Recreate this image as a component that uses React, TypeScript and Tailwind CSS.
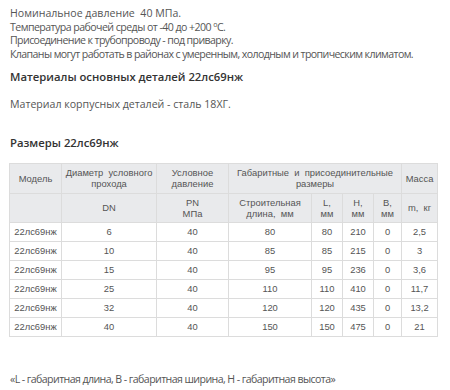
import React from "react";

const rows = [
  ["22лс69нж", "6", "40", "80", "80", "210", "0", "2,5"],
  ["22лс69нж", "10", "40", "85", "85", "215", "0", "3"],
  ["22лс69нж", "15", "40", "95", "95", "236", "0", "3,6"],
  ["22лс69нж", "25", "40", "110", "110", "410", "0", "11,7"],
  ["22лс69нж", "32", "40", "120", "120", "435", "0", "13,2"],
  ["22лс69нж", "40", "40", "150", "150", "475", "0", "21"],
];

const th = "border border-[#dcdcdc] bg-[#e9eaec] font-normal text-center align-middle leading-[11px] px-0";
const td = "border border-[#dcdcdc] text-center align-middle h-[19px] p-0";

const App = () => {
  return (
    <div className="w-[450px] h-[390px] bg-white overflow-hidden px-[10px] pt-[7px] text-[#555] font-['Open_Sans',sans-serif]">
      <div className="text-[10.6px] leading-[13.7px] whitespace-nowrap">
        <p>Номинальное давление&nbsp; 40 МПа.</p>
        <p className="tracking-[-0.55px]">
          Температура рабочей среды от -40 до +200 <sup className="text-[7px]">o</sup>С.
        </p>
        <p className="tracking-[-0.6px]">Присоединение к трубопроводу - под приварку.</p>
        <p className="tracking-[-0.6px]">Клапаны могут работать в районах с умеренным, холодным и тропическим климатом.</p>
      </div>

      <h3 className="mt-[7px] text-[11.3px] leading-[16px] font-semibold text-[#333]">
        Материалы основных деталей 22лс69нж
      </h3>
      <p className="mt-[12px] text-[10.6px] leading-[14px]">Материал корпусных деталей - сталь 18ХГ.</p>

      <h3 className="mt-[24px] text-[11.3px] leading-[16px] font-semibold text-[#333]">
        Размеры 22лс69нж
      </h3>

      <table className="mt-[12px] -ml-[1px] w-[428px] table-fixed border-collapse text-[9.4px] font-['Liberation_Sans',sans-serif] text-[#555]">
        <colgroup>
          <col className="w-[52px]" />
          <col className="w-[95px]" />
          <col className="w-[72px]" />
          <col className="w-[83px]" />
          <col className="w-[31px]" />
          <col className="w-[31px]" />
          <col className="w-[28px]" />
          <col className="w-[36px]" />
        </colgroup>
        <thead>
          <tr className="h-[30px]">
            <th className={th}>Модель</th>
            <th className={th}>Диаметр&nbsp; условного прохода</th>
            <th className={th}>Условное давление</th>
            <th className={th} colSpan={4}>Габаритные&nbsp; и&nbsp; присоединительные размеры</th>
            <th className={th}>Масса</th>
          </tr>
          <tr className="h-[29px]">
            <th className={th}></th>
            <th className={th}>DN</th>
            <th className={th}>
              PN
              <br />
              МПа
            </th>
            <th className={th}>
              Строительная
              <br />
              длина,&nbsp; мм
            </th>
            <th className={th}>
              L,
              <br />
              мм
            </th>
            <th className={th}>
              H,
              <br />
              мм
            </th>
            <th className={th}>
              B,
              <br />
              мм
            </th>
            <th className={th}>m,&nbsp; кг</th>
          </tr>
        </thead>
        <tbody>
          {rows.map((r, i) => (
            <tr key={i}>
              {r.map((c, j) => (
                <td key={j} className={td}>
                  {c}
                </td>
              ))}
            </tr>
          ))}
        </tbody>
      </table>

      <p className="mt-[35px] text-[10.6px] leading-[14px] whitespace-nowrap tracking-[-0.58px]">
        «L - габаритная длина, В - габаритная ширина, Н - габаритная высота»
      </p>
    </div>
  );
};

export default App;
